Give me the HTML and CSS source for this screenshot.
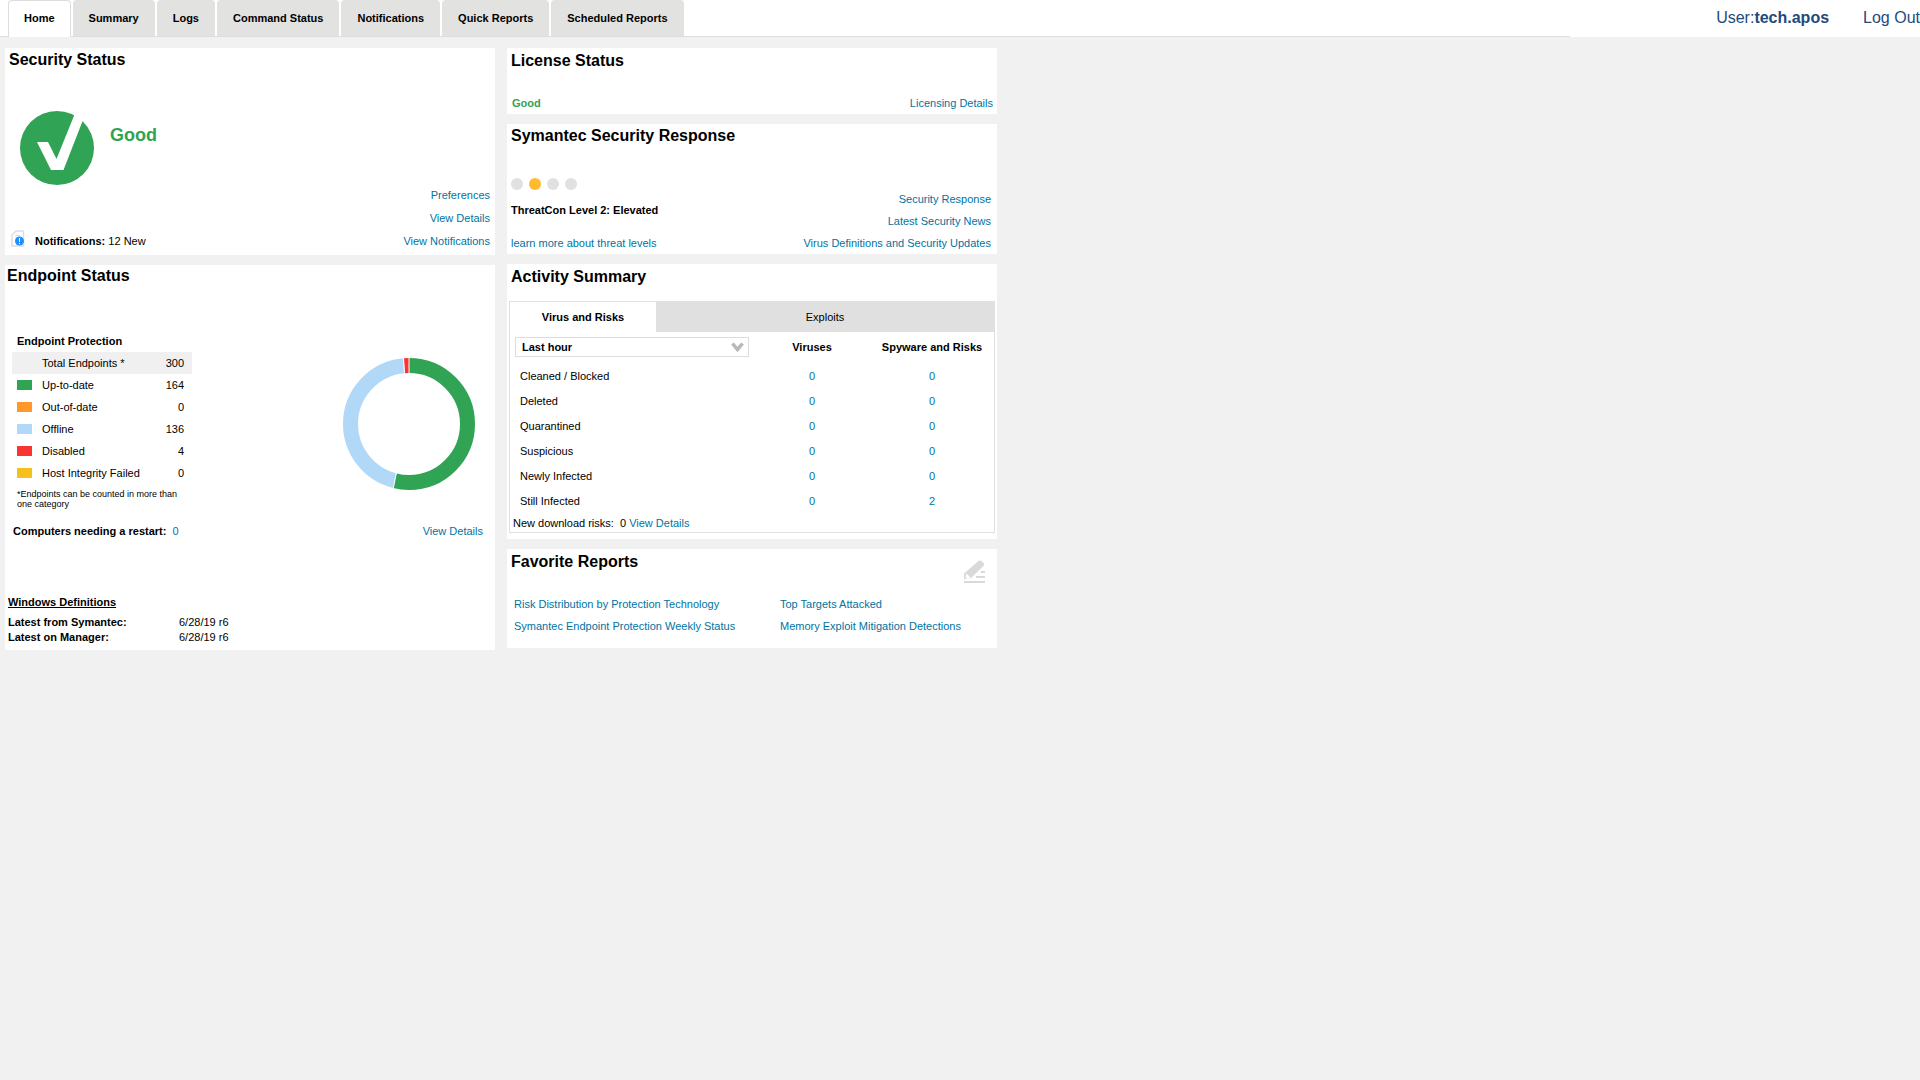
FILE: index.html
```html
<!DOCTYPE html>
<html lang="en">
<head>
<meta charset="utf-8">
<title>Symantec Endpoint Protection Manager</title>
<link rel="stylesheet" href="styles.css">
</head>
<body>
<header class="topbar">
  <nav class="tabs">
    <a class="tab tab-active" href="#">Home</a>
    <a class="tab" href="#">Summary</a>
    <a class="tab" href="#">Logs</a>
    <a class="tab" href="#">Command Status</a>
    <a class="tab" href="#">Notifications</a>
    <a class="tab" href="#">Quick Reports</a>
    <a class="tab" href="#">Scheduled Reports</a>
  </nav>
  <div class="account">
    <span>User:<b>tech.apos</b></span>
    <a class="logout" href="#">Log Out</a>
  </div>
</header>
<main class="dashboard">
  <div class="column">
    <section class="card security">
      <h2>Security Status</h2>
      <div class="split security-body">
        <div>
          <div class="status">
            <svg width="74" height="74" viewBox="0 0 74 74" aria-hidden="true">
              <circle cx="37" cy="37" r="37" fill="#31a354"/>
              <path d="M17 31h11l8.500 17L54.500 3.500L57 0L64 8L62 11.500L43.500 59H31z" fill="#fff"/>
            </svg>
            <strong class="status-label">Good</strong>
          </div>
          <p class="notice">
            <svg width="14" height="18" viewBox="0 0 14 18" aria-hidden="true">
              <path d="M1 16V5L5 1h7.500v15z" fill="#fff" stroke="#ddd" stroke-width="1.500"/>
              <path d="M4 5.500h5M4 8h3" stroke="#ddd"/>
              <circle cx="8.500" cy="11" r="4.500" fill="#1e90ff"/>
              <path d="M8.500 8v4M8.500 13v1" stroke="#fff"/>
            </svg>
            <span><b>Notifications:</b> 12 New</span>
          </p>
        </div>
        <div class="links security-links">
          <a href="#">Preferences</a>
          <a href="#">View Details</a>
          <a href="#">View Notifications</a>
        </div>
      </div>
    </section>
    <section class="card endpoint">
      <h2>Endpoint Status</h2>
      <div class="split">
        <div class="legend">
          <table class="legend-table">
            <caption>Endpoint Protection</caption>
            <tbody>
              <tr class="total"><td></td><th scope="row">Total Endpoints *</th><td class="count">300</td></tr>
              <tr><td><i class="swatch current"></i></td><th scope="row">Up-to-date</th><td class="count">164</td></tr>
              <tr><td><i class="swatch outdated"></i></td><th scope="row">Out-of-date</th><td class="count">0</td></tr>
              <tr><td><i class="swatch offline"></i></td><th scope="row">Offline</th><td class="count">136</td></tr>
              <tr><td><i class="swatch disabled"></i></td><th scope="row">Disabled</th><td class="count">4</td></tr>
              <tr><td><i class="swatch integrity"></i></td><th scope="row">Host Integrity Failed</th><td class="count">0</td></tr>
            </tbody>
          </table>
          <p class="footnote">*Endpoints can be counted in more than one category</p>
        </div>
        <svg class="donut" width="132" height="132" viewBox="0 0 132 132" role="img" aria-label="Endpoint status chart">
          <g fill="none" stroke-width="15" transform="rotate(-90 66 66)">
            <circle cx="66" cy="66" r="58.500" stroke="#31a354" pathLength="304" stroke-dasharray="164 304"/>
            <circle cx="66" cy="66" r="58.500" stroke="#b2d8f8" pathLength="304" stroke-dasharray="136 304" stroke-dashoffset="-164"/>
            <circle cx="66" cy="66" r="58.500" stroke="#f93431" pathLength="304" stroke-dasharray="4 304" stroke-dashoffset="-300"/>
          </g>
          <path d="M66 0v16M60.500 0l1 16M53.500 114L50 132" stroke="#fff"/>
        </svg>
      </div>
      <div class="split restart">
        <span><b>Computers needing a restart:</b> &nbsp;<a href="#">0</a></span>
        <a href="#">View Details</a>
      </div>
      <div class="definitions">
        <h3>Windows Definitions</h3>
        <dl>
          <dt>Latest from Symantec:</dt><dd>6/28/19 r6</dd>
          <dt>Latest on Manager:</dt><dd>6/28/19 r6</dd>
        </dl>
      </div>
    </section>
  </div>
  <div class="column">
    <section class="card license">
      <h2>License Status</h2>
      <div class="split license-row">
        <strong class="good">Good</strong>
        <a href="#">Licensing Details</a>
      </div>
    </section>
    <section class="card response">
      <h2>Symantec Security Response</h2>
      <div class="split response-body">
        <div class="threat">
          <div class="dots"><i></i><i class="on"></i><i></i><i></i></div>
          <b>ThreatCon Level 2: Elevated</b>
          <a href="#">learn more about threat levels</a>
        </div>
        <div class="links response-links">
          <a href="#">Security Response</a>
          <a href="#">Latest Security News</a>
          <a href="#">Virus Definitions and Security Updates</a>
        </div>
      </div>
    </section>
    <section class="card activity">
      <h2>Activity Summary</h2>
      <div class="panel">
        <div class="panel-tabs">
          <button class="panel-tab selected" type="button">Virus and Risks</button>
          <button class="panel-tab" type="button">Exploits</button>
        </div>
        <table class="risks">
          <thead>
            <tr>
              <th>
                <div class="picker">
                  <select aria-label="Time range"><option>Last hour</option></select>
                  <svg width="13" height="10" viewBox="0 0 13 10" aria-hidden="true"><path d="M1.500 1.500l5 6 5-6" fill="none" stroke="#b8b8b8" stroke-width="3.500"/></svg>
                </div>
              </th>
              <th class="number" scope="col">Viruses</th>
              <th class="number" scope="col">Spyware and Risks</th>
            </tr>
          </thead>
          <tbody>
            <tr><th scope="row">Cleaned / Blocked</th><td><a href="#">0</a></td><td><a href="#">0</a></td></tr>
            <tr><th scope="row">Deleted</th><td><a href="#">0</a></td><td><a href="#">0</a></td></tr>
            <tr><th scope="row">Quarantined</th><td><a href="#">0</a></td><td><a href="#">0</a></td></tr>
            <tr><th scope="row">Suspicious</th><td><a href="#">0</a></td><td><a href="#">0</a></td></tr>
            <tr><th scope="row">Newly Infected</th><td><a href="#">0</a></td><td><a href="#">0</a></td></tr>
            <tr><th scope="row">Still Infected</th><td><a href="#">0</a></td><td><a href="#">2</a></td></tr>
          </tbody>
        </table>
        <p class="downloads">New download risks: &nbsp;0 <a href="#">View Details</a></p>
      </div>
    </section>
    <section class="card favorites">
      <div class="split">
        <h2>Favorite Reports</h2>
        <button class="edit" type="button" aria-label="Edit favorite reports">
          <svg width="22" height="24" viewBox="0 0 22 24" aria-hidden="true">
            <path d="M0 19.500v-6L14.500 1q1.500-1 3 0l2 2q1.500 1.500 0 3L7 18z" fill="#d9d9d9"/>
            <path d="M2.500 13.500l4 4-3.500 1.500-1.500-1.500z" fill="#fff"/>
            <path d="M17 12h4M12 17h9M0 22h21" stroke="#d9d9d9" stroke-width="2"/>
          </svg>
        </button>
      </div>
      <div class="reports">
        <a href="#">Risk Distribution by Protection Technology</a>
        <a href="#">Top Targets Attacked</a>
        <a href="#">Symantec Endpoint Protection Weekly Status</a>
        <a href="#">Memory Exploit Mitigation Detections</a>
      </div>
    </section>
  </div>
</main>
</body>
</html>
```

FILE: styles.css
```css
* {
  box-sizing: border-box;
}

body {
  margin: 0;
  background: #f1f1f1;
  color: #000;
  font: 11px/22px Arial, "Liberation Sans", sans-serif;
}

a {
  color: #0073a2;
  text-decoration: none;
}

h2, h3, p, dl, dd {
  margin: 0;
}

button, select {
  font: inherit;
  color: inherit;
}

.topbar {
  display: flex;
  background: #fff;
}

.tabs {
  display: flex;
  flex: 1;
  gap: 2px;
  padding-left: 8px;
  border-bottom: 1px solid #ddd;
}

.tab {
  padding: 0 16px;
  border-radius: 4px 4px 0 0;
  background: #e2e2e0;
  color: #000;
  font-weight: bold;
  line-height: 36px;
}

.tab-active {
  padding: 0 15px;
  margin-bottom: -1px;
  border: 1px solid #ddd;
  border-bottom: 0;
  background: #fff;
  line-height: 34px;
}

.account {
  display: flex;
  justify-content: flex-end;
  gap: 34px;
  min-width: 350px;
  color: #1f4a7c;
  font-size: 16px;
  line-height: 36px;
}

.logout {
  color: inherit;
}

.dashboard {
  display: grid;
  grid-template-columns: 1fr 1fr;
  gap: 12px;
  align-items: start;
  max-width: 997px;
  padding: 11px 0 20px 5px;
}

.column {
  display: flex;
  flex-direction: column;
  gap: 10px;
}

.card {
  background: #fff;
}

.card h2 {
  padding-left: 4px;
  font-size: 16px;
  line-height: 26px;
}

.security h2 {
  line-height: 23px;
}

.endpoint h2 {
  padding-left: 2px;
  line-height: 21px;
}

.response h2 {
  line-height: 24px;
}

.split {
  display: flex;
  justify-content: space-between;
}

.links {
  display: flex;
  flex-direction: column;
  align-items: flex-end;
  justify-content: flex-end;
}

.security-body {
  padding: 40px 5px 2px 6px;
}

.security-links {
  line-height: 23px;
}

.status {
  display: flex;
  gap: 16px;
  padding-left: 9px;
}

.status-label {
  color: #31a354;
  font-size: 18px;
  line-height: 48px;
}

.notice {
  display: flex;
  gap: 10px;
  padding: 45px 0 1px;
}

.legend {
  width: 180px;
  margin: 44px 0 0 7px;
}

.legend-table {
  width: 100%;
  border-collapse: collapse;
}

.legend-table caption {
  padding-left: 5px;
  font-weight: bold;
  text-align: left;
}

.legend-table td, .legend-table th {
  height: 22px;
  padding: 0;
  font-weight: normal;
  text-align: left;
}

.legend-table td:first-child {
  width: 30px;
  padding-left: 5px;
}

.legend-table .count {
  padding-right: 8px;
  text-align: right;
}

.total {
  background: #f0f0f0;
}

.swatch {
  display: block;
  width: 15px;
  height: 10px;
}

.current {
  background: #31a354;
}

.outdated {
  background: #ff982a;
}

.offline {
  background: #b2d8f8;
}

.disabled {
  background: #f93431;
}

.integrity {
  background: #f5bf1c;
}

.footnote {
  padding: 5px 0 0 5px;
  font-size: 9px;
  line-height: 10px;
}

.donut {
  margin: 72px 20px 0 0;
}

.restart {
  padding: 11px 12px 0 8px;
}

.definitions {
  padding: 52px 3px 5px;
}

.definitions h3 {
  font-size: 11px;
  line-height: 16px;
  text-decoration: underline;
}

.definitions dl {
  display: grid;
  grid-template-columns: 171px 1fr;
  padding-top: 5px;
  line-height: 15px;
}

.definitions dt {
  font-weight: bold;
}

.license-row {
  padding: 18px 4px 0 5px;
}

.good {
  color: #31a354;
}

.response-body {
  padding: 30px 6px 0 4px;
}

.threat {
  display: flex;
  flex-direction: column;
}

.threat b {
  padding: 9px 0 11px;
}

.dots {
  display: flex;
  gap: 6px;
}

.dots i {
  width: 12px;
  height: 12px;
  border-radius: 50%;
  background: #e1e1e1;
}

.dots .on {
  background: #febb30;
}

.activity {
  padding-bottom: 6px;
}

.panel {
  margin: 11px 2px 0;
  border: 1px solid #e0e0e0;
}

.panel-tabs {
  display: grid;
  grid-template-columns: 146px 1fr;
}

.panel-tab {
  height: 30px;
  padding: 0;
  border: 0;
  background: #e0e0e0;
}

.panel-tab.selected {
  background: #fff;
  font-weight: bold;
}

.risks {
  width: 100%;
  padding-right: 2px;
  border-spacing: 0;
  table-layout: fixed;
}

.risks th, .risks td {
  height: 25px;
  padding: 0;
  line-height: 20px;
  text-align: center;
}

.risks thead th {
  height: 31px;
  padding-bottom: 1px;
}

.risks .number {
  width: 120px;
}

.risks tbody th {
  padding-left: 10px;
  font-weight: normal;
  text-align: left;
}

.picker {
  position: relative;
  margin: 0 3px 0 5px;
}

.picker select {
  display: block;
  width: 100%;
  height: 20px;
  padding: 0 6px;
  appearance: none;
  border: 1px solid #ddd;
  border-radius: 0;
  background: #fff;
  font-weight: bold;
  line-height: 18px;
}

.picker svg {
  position: absolute;
  top: 5px;
  right: 5px;
  pointer-events: none;
}

.downloads {
  padding: 1px 0 0 3px;
  line-height: 18px;
}

.favorites {
  padding-bottom: 11px;
}

.edit {
  height: 35px;
  padding: 11px 11px 0 0;
  border: 0;
  background: none;
  line-height: 0;
}

.reports {
  display: grid;
  grid-template-columns: 266px 1fr;
  padding: 9px 0 0 7px;
}
```
